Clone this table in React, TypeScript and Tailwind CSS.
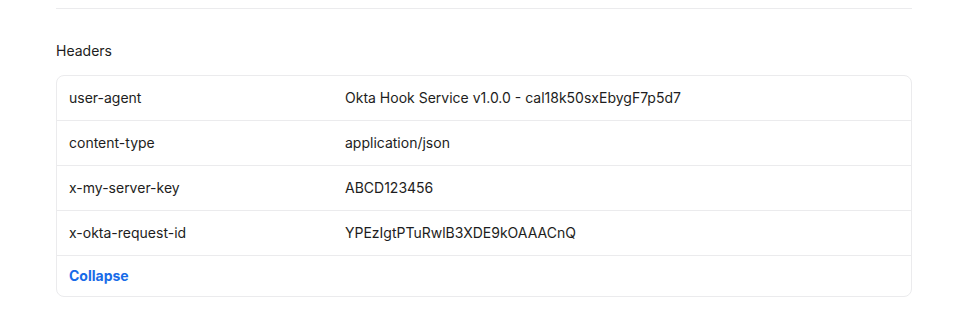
import React from 'react';

const headers: [string, string][] = [
  ['user-agent', 'Okta Hook Service v1.0.0 - cal18k50sxEbygF7p5d7'],
  ['content-type', 'application/json'],
  ['x-my-server-key', 'ABCD123456'],
  ['x-okta-request-id', 'YPEzIgtPTuRwlB3XDE9kOAAACnQ'],
];

const App = () => {
  return (
    <div
      className="min-h-screen bg-white px-[56px] pt-2 text-[14px] text-[#1d1d21]"
      style={{ fontFamily: 'Inter, "Noto Sans", sans-serif' }}
    >
      {/* 上の区切り線 */}
      <div className="h-px w-[856px] bg-[#ebebed]" />

      <div className="mt-[32px] mb-[14px] leading-5">Headers</div>

      {/* ヘッダー一覧 */}
      <div className="w-[856px] rounded-lg border border-[#ebebed]">
        {headers.map(([key, value]) => (
          <div key={key} className="flex border-b border-[#ebebed] py-3 leading-5">
            <div className="w-[288px] shrink-0 pl-3">{key}</div>
            <div>{value}</div>
          </div>
        ))}
        <div className="py-[10px] pl-3 leading-5">
          <button className="font-bold text-[#186be8]">Collapse</button>
        </div>
      </div>
    </div>
  );
};

export default App;
